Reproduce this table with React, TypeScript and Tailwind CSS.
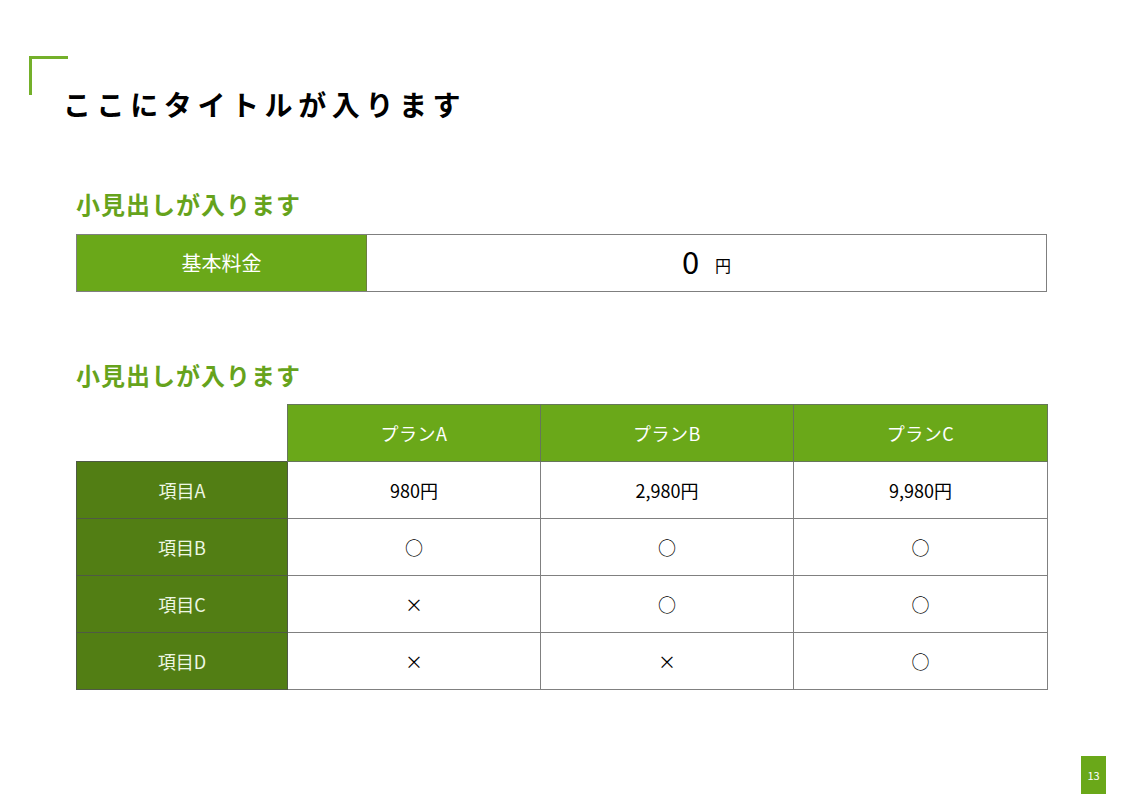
import React from 'react';

const font = { fontFamily: '"Noto Sans CJK JP", "Noto Sans", sans-serif' };

const plans = ['プランA', 'プランB', 'プランC'];
const rows: { label: string; cells: string[] }[] = [
  { label: '項目A', cells: ['980円', '2,980円', '9,980円'] },
  { label: '項目B', cells: ['○', '○', '○'] },
  { label: '項目C', cells: ['×', '○', '○'] },
  { label: '項目D', cells: ['×', '×', '○'] },
];

function Heading({ children }: { children: React.ReactNode }) {
  return <h2 className="text-[24px] font-bold leading-[30px] text-[#66a31c] tracking-[1px]">{children}</h2>;
}

export default function App() {
  return (
    <div className="relative w-[1123px] h-[794px] bg-white text-black overflow-hidden" style={font}>
      <header className="flex pt-[56px] pl-[29px]">
        <div className="w-[39px] h-[39px] border-l-[3px] border-t-[3px] border-[#74b02a]" />
        <h1 className="mt-[30px] ml-[-5px] text-[28px] font-bold leading-[36px] tracking-[5.6px]">ここにタイトルが入ります</h1>
      </header>

      <section className="ml-[76px] w-[971px] mt-[67px]">
        <Heading>小見出しが入ります</Heading>
        <div className="mt-[15px] flex h-[58px] border border-[#7f7f7f]">
          <div className="w-[290px] bg-[#6aa819] border-r border-[#6b7f3f] flex items-center justify-center text-white text-[20px]">基本料金</div>
          <div className="flex-1 flex items-end justify-center gap-[16px] pb-[13px]">
            <span className="text-[31px] leading-[34px]">0</span>
            <span className="text-[16px] leading-[22px] mb-[2px]">円</span>
          </div>
        </div>
      </section>

      <section className="ml-[76px] w-[971px] mt-[68px]">
        <Heading>小見出しが入ります</Heading>
        <table className="mt-[14px] border-collapse table-fixed w-[971px] text-[18px]">
          <colgroup>
            <col className="w-[211px]" />
            <col className="w-[253px]" />
            <col className="w-[253px]" />
            <col className="w-[254px]" />
          </colgroup>
          <thead>
            <tr className="h-[57px]">
              <th className="p-0" />
              {plans.map((p) => (
                <th key={p} className="p-0 font-normal bg-[#6aa819] text-white text-[18px] tracking-[0.5px] border border-[#66765a]">{p}</th>
              ))}
            </tr>
          </thead>
          <tbody>
            {rows.map((r) => (
              <tr key={r.label} className="h-[57px]">
                <td className="p-0 text-center bg-[#527e14] text-[#eef7e4] text-[18px] border border-[#4f5a44]">{r.label}</td>
                {r.cells.map((c, i) => (
                  <td key={i} className="p-0 text-center border border-[#808080]">{c}</td>
                ))}
              </tr>
            ))}
          </tbody>
        </table>
      </section>

      <div className="absolute left-[1081px] top-[756px] w-[25px] h-[38px] bg-[#6aa819] flex items-center justify-center text-white text-[11px]">13</div>
    </div>
  );
}
